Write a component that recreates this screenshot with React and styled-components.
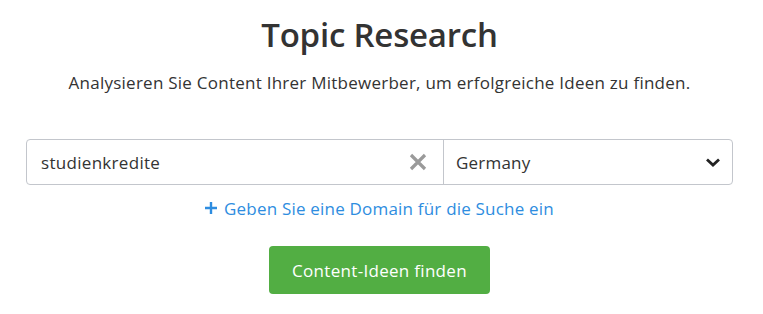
import React from "react";
import styled, { createGlobalStyle } from "styled-components";

const Global = createGlobalStyle`
  html, body { margin: 0; padding: 0; background: #fff; }
  body { font-family: "Open Sans", "Noto Sans", sans-serif; color: #333; }
  * { box-sizing: border-box; }
`;

const Page = styled.div`
  width: 763px;
  height: 314px;
  display: flex;
  flex-direction: column;
  align-items: center;
  padding: 14px 30px 0 26px;
`;

const Title = styled.h1`
  margin: 0;
  font-size: 33px;
  font-weight: 600;
  line-height: 42px;
  color: #333;
  letter-spacing: -0.2px;
`;

const Subtitle = styled.p`
  margin: 16px 0 0;
  font-size: 17px;
  line-height: 22px;
  color: #333;
  letter-spacing: 0.25px;
`;

const SearchBar = styled.div`
  margin-top: 45px;
  width: 100%;
  height: 46px;
  display: flex;
  border: 1px solid #c3c6cc;
  border-radius: 4px;
  background: #fff;
`;

const Field = styled.div`
  flex: 0 0 417px;
  display: flex;
  align-items: center;
  padding: 0 16px 0 14px;
  border-right: 1px solid #c3c6cc;
  font-size: 17px;
  letter-spacing: 0.3px;
  color: #333;
`;

const FieldText = styled.span`
  flex: 1;
`;

const Select = styled.div`
  flex: 1;
  display: flex;
  align-items: center;
  justify-content: space-between;
  padding: 0 11px 0 12px;
  font-size: 17px;
  letter-spacing: 0.2px;
  color: #333;
`;

const IconBtn = styled.span`
  display: flex;
  align-items: center;
  justify-content: center;
`;

const AddLink = styled.a`
  margin-top: 13px;
  display: flex;
  align-items: center;
  gap: 7px;
  font-size: 17px;
  letter-spacing: 0.2px;
  color: #2e8de0;
  text-decoration: none;
  line-height: 22px;
`;

const PlusIcon = styled.svg`
  display: block;
  margin-top: -2px;
`;

const Button = styled.button`
  margin-top: 26px;
  width: 221px;
  height: 48px;
  border: none;
  border-radius: 4px;
  background: #52ae43;
  color: #fff;
  font-family: inherit;
  font-size: 17px;
  letter-spacing: 0.3px;
  cursor: pointer;
`;

export default function App() {
  return (
    <>
      <Global />
      <Page>
        <Title>Topic Research</Title>
        <Subtitle>Analysieren Sie Content Ihrer Mitbewerber, um erfolgreiche Ideen zu finden.</Subtitle>
        <SearchBar>
          <Field>
            <FieldText>studienkredite</FieldText>
            <IconBtn>
              <svg width="18" height="18" viewBox="0 0 18 18">
                <path d="M2 2 L16 16 M16 2 L2 16" stroke="#9a9a9a" strokeWidth="3.2" strokeLinecap="butt" />
              </svg>
            </IconBtn>
          </Field>
          <Select>
            <span>Germany</span>
            <IconBtn>
              <svg width="16" height="11" viewBox="0 0 16 11">
                <path d="M2 2.5 L8 8 L14 2.5" stroke="#222" strokeWidth="2.8" fill="none" />
              </svg>
            </IconBtn>
          </Select>
        </SearchBar>
        <AddLink href="#">
          <PlusIcon width="12" height="12" viewBox="0 0 12 12">
            <path d="M6 0 V12 M0 6 H12" stroke="#2e8de0" strokeWidth="2.4" />
          </PlusIcon>
          Geben Sie eine Domain für die Suche ein
        </AddLink>
        <Button>Content-Ideen finden</Button>
      </Page>
    </>
  );
}
